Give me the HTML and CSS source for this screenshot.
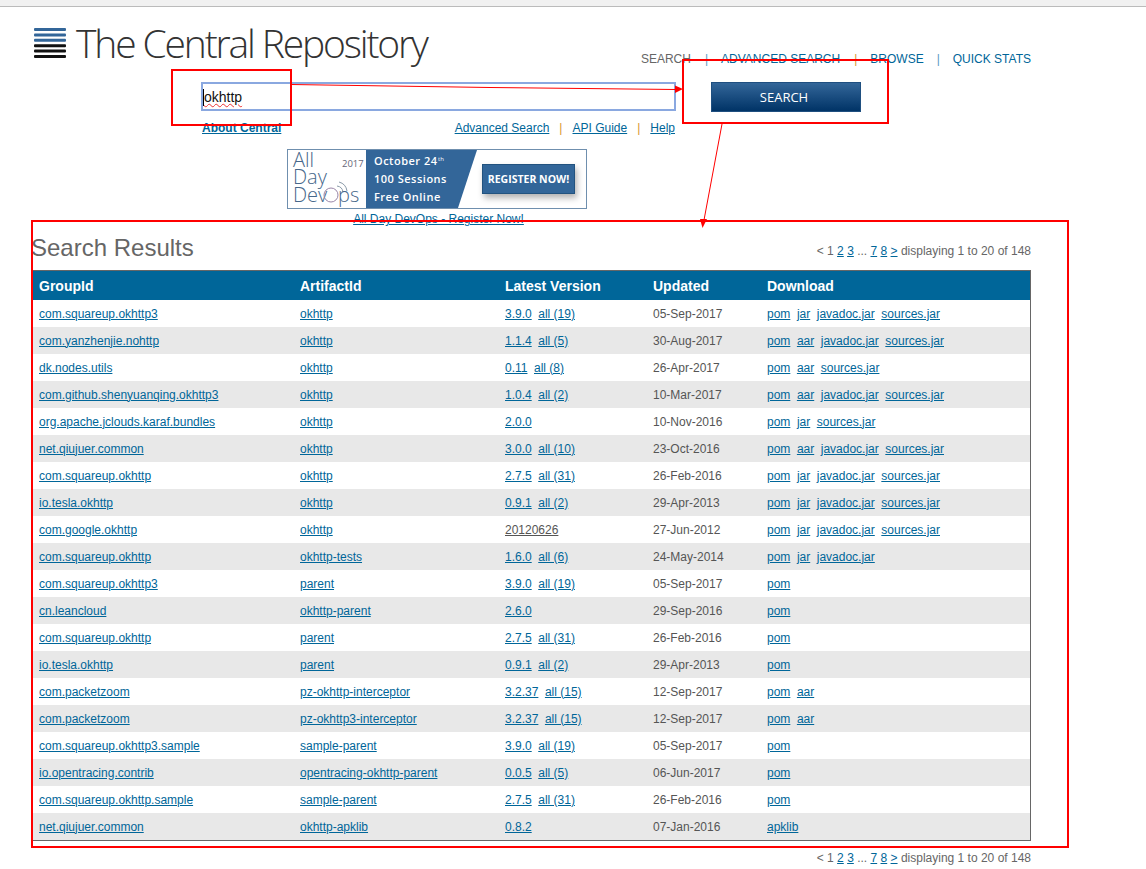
FILE: index.html
```html
<!DOCTYPE html>
<html lang="en">
<head>
    <meta charset="UTF-8">
    <title>The Central Repository Search Results</title>
    <link rel="stylesheet" href="styles.css">
</head>
<body>
    <div class="browser-strip"></div>

    <div class="page">
        <!-- Logo and top navigation -->
        <div class="masthead">
            <div class="logo">
                <svg class="logo-mark" width="32" height="31" viewBox="0 0 32 31">
                    <rect y="0" width="32" height="3" rx="1" fill="#336699"/>
                    <rect y="5.400" width="32" height="3" rx="1" fill="#336699"/>
                    <rect y="10.800" width="32" height="3" rx="1" fill="#336699"/>
                    <rect y="16.200" width="32" height="3" rx="1" fill="#111"/>
                    <rect y="21.600" width="32" height="3" rx="1" fill="#111"/>
                    <rect y="27" width="32" height="3" rx="1" fill="#111"/>
                </svg>
                <span class="logo-text">The Central Repository</span>
            </div>
            <div class="top-nav">
                <span class="current">SEARCH</span>
                <span class="sep blue">|</span>
                <a href="#">ADVANCED SEARCH</a>
                <span class="sep orange wide">|</span>
                <a href="#">BROWSE</a>
                <span class="sep blue">|</span>
                <a href="#">QUICK STATS</a>
            </div>
        </div>

        <!-- Search box -->
        <div class="search-area">
            <div class="search-col">
                <div class="search-box"><span class="caret"></span><span class="search-text">okhttp</span></div>
                <div class="search-links">
                    <a class="about" href="#">About Central</a>
                    <div class="help-links">
                        <a href="#">Advanced Search</a>
                        <span class="sep orange">|</span>
                        <a href="#">API Guide</a>
                        <span class="sep orange">|</span>
                        <a href="#">Help</a>
                    </div>
                </div>
            </div>
            <button class="search-button" type="button">SEARCH</button>
        </div>

        <!-- Banner -->
        <div class="promo">
            <svg class="promo-image" width="300" height="60" viewBox="0 0 300 60">
                <defs>
                    <filter id="ctaShadow" x="-10%" y="-20%" width="125%" height="160%">
                        <feDropShadow dx="2" dy="4" stdDeviation="3" flood-color="#000" flood-opacity="0.3"/>
                    </filter>
                </defs>
                <rect x="0.5" y="0.5" width="299" height="59" fill="#fff" stroke="#6f8fae"/>
                <polygon points="79,1 190,1 171,59 79,59" fill="#336699"/>
                <text x="6" y="18" class="pr-big">All</text>
                <text x="6" y="35" class="pr-big">Day</text>
                <text x="6" y="53" class="pr-big">Dev</text>
                <circle cx="44" cy="46" r="7" fill="none" stroke="#9a86a8" stroke-width="1"/>
                <path d="M50 37a7 7 0 0 1 6 6M52 33a11 11 0 0 1 8 9" fill="none" stroke="#8a9aa8" stroke-width="1"/>
                <text x="51" y="53" class="pr-big">ps</text>
                <text x="55" y="18" class="pr-year">2017</text>
                <text x="87" y="16" class="pr-line">October 24</text>
                <text x="151" y="12" class="pr-th">th</text>
                <text x="87" y="34" class="pr-line">100 Sessions</text>
                <text x="87" y="52" class="pr-line">Free Online</text>
                <rect x="195.500" y="15.500" width="92" height="29" fill="#336699" stroke="#24527f" filter="url(#ctaShadow)"/>
                <text x="241.500" y="34" text-anchor="middle" class="pr-cta">REGISTER NOW!</text>
            </svg>
            <a href="#">All Day DevOps - Register Now!</a>
        </div>

        <!-- Results -->
        <div class="results-head">
            <h2>Search Results</h2>
            <div class="pager">
                &lt; 1 <a href="#">2</a> <a href="#">3</a> ... <a href="#">7</a> <a href="#">8</a> <a href="#">&gt;</a> displaying 1 to 20 of 148
            </div>
        </div>

        <table class="results">
            <colgroup>
                <col class="c-group"><col class="c-artifact"><col class="c-version"><col class="c-updated"><col>
            </colgroup>
            <thead>
                <tr><th>GroupId</th><th>ArtifactId</th><th>Latest Version</th><th>Updated</th><th>Download</th></tr>
            </thead>
            <tbody>
                <tr><td><a href="#">com.squareup.okhttp3</a></td><td><a href="#">okhttp</a></td><td class="links"><a href="#">3.9.0</a> <a href="#">all (19)</a></td><td>05-Sep-2017</td><td class="links"><a href="#">pom</a> <a href="#">jar</a> <a href="#">javadoc.jar</a> <a href="#">sources.jar</a></td></tr>
                <tr><td><a href="#">com.yanzhenjie.nohttp</a></td><td><a href="#">okhttp</a></td><td class="links"><a href="#">1.1.4</a> <a href="#">all (5)</a></td><td>30-Aug-2017</td><td class="links"><a href="#">pom</a> <a href="#">aar</a> <a href="#">javadoc.jar</a> <a href="#">sources.jar</a></td></tr>
                <tr><td><a href="#">dk.nodes.utils</a></td><td><a href="#">okhttp</a></td><td class="links"><a href="#">0.11</a> <a href="#">all (8)</a></td><td>26-Apr-2017</td><td class="links"><a href="#">pom</a> <a href="#">aar</a> <a href="#">sources.jar</a></td></tr>
                <tr><td><a href="#">com.github.shenyuanqing.okhttp3</a></td><td><a href="#">okhttp</a></td><td class="links"><a href="#">1.0.4</a> <a href="#">all (2)</a></td><td>10-Mar-2017</td><td class="links"><a href="#">pom</a> <a href="#">aar</a> <a href="#">javadoc.jar</a> <a href="#">sources.jar</a></td></tr>
                <tr><td><a href="#">org.apache.jclouds.karaf.bundles</a></td><td><a href="#">okhttp</a></td><td class="links"><a href="#">2.0.0</a></td><td>10-Nov-2016</td><td class="links"><a href="#">pom</a> <a href="#">jar</a> <a href="#">sources.jar</a></td></tr>
                <tr><td><a href="#">net.qiujuer.common</a></td><td><a href="#">okhttp</a></td><td class="links"><a href="#">3.0.0</a> <a href="#">all (10)</a></td><td>23-Oct-2016</td><td class="links"><a href="#">pom</a> <a href="#">aar</a> <a href="#">javadoc.jar</a> <a href="#">sources.jar</a></td></tr>
                <tr><td><a href="#">com.squareup.okhttp</a></td><td><a href="#">okhttp</a></td><td class="links"><a href="#">2.7.5</a> <a href="#">all (31)</a></td><td>26-Feb-2016</td><td class="links"><a href="#">pom</a> <a href="#">jar</a> <a href="#">javadoc.jar</a> <a href="#">sources.jar</a></td></tr>
                <tr><td><a href="#">io.tesla.okhttp</a></td><td><a href="#">okhttp</a></td><td class="links"><a href="#">0.9.1</a> <a href="#">all (2)</a></td><td>29-Apr-2013</td><td class="links"><a href="#">pom</a> <a href="#">jar</a> <a href="#">javadoc.jar</a> <a href="#">sources.jar</a></td></tr>
                <tr><td><a href="#">com.google.okhttp</a></td><td><a href="#">okhttp</a></td><td class="links"><a class="plain" href="#">20120626</a></td><td>27-Jun-2012</td><td class="links"><a href="#">pom</a> <a href="#">jar</a> <a href="#">javadoc.jar</a> <a href="#">sources.jar</a></td></tr>
                <tr><td><a href="#">com.squareup.okhttp</a></td><td><a href="#">okhttp-tests</a></td><td class="links"><a href="#">1.6.0</a> <a href="#">all (6)</a></td><td>24-May-2014</td><td class="links"><a href="#">pom</a> <a href="#">jar</a> <a href="#">javadoc.jar</a></td></tr>
                <tr><td><a href="#">com.squareup.okhttp3</a></td><td><a href="#">parent</a></td><td class="links"><a href="#">3.9.0</a> <a href="#">all (19)</a></td><td>05-Sep-2017</td><td class="links"><a href="#">pom</a></td></tr>
                <tr><td><a href="#">cn.leancloud</a></td><td><a href="#">okhttp-parent</a></td><td class="links"><a href="#">2.6.0</a></td><td>29-Sep-2016</td><td class="links"><a href="#">pom</a></td></tr>
                <tr><td><a href="#">com.squareup.okhttp</a></td><td><a href="#">parent</a></td><td class="links"><a href="#">2.7.5</a> <a href="#">all (31)</a></td><td>26-Feb-2016</td><td class="links"><a href="#">pom</a></td></tr>
                <tr><td><a href="#">io.tesla.okhttp</a></td><td><a href="#">parent</a></td><td class="links"><a href="#">0.9.1</a> <a href="#">all (2)</a></td><td>29-Apr-2013</td><td class="links"><a href="#">pom</a></td></tr>
                <tr><td><a href="#">com.packetzoom</a></td><td><a href="#">pz-okhttp-interceptor</a></td><td class="links"><a href="#">3.2.37</a> <a href="#">all (15)</a></td><td>12-Sep-2017</td><td class="links"><a href="#">pom</a> <a href="#">aar</a></td></tr>
                <tr><td><a href="#">com.packetzoom</a></td><td><a href="#">pz-okhttp3-interceptor</a></td><td class="links"><a href="#">3.2.37</a> <a href="#">all (15)</a></td><td>12-Sep-2017</td><td class="links"><a href="#">pom</a> <a href="#">aar</a></td></tr>
                <tr><td><a href="#">com.squareup.okhttp3.sample</a></td><td><a href="#">sample-parent</a></td><td class="links"><a href="#">3.9.0</a> <a href="#">all (19)</a></td><td>05-Sep-2017</td><td class="links"><a href="#">pom</a></td></tr>
                <tr><td><a href="#">io.opentracing.contrib</a></td><td><a href="#">opentracing-okhttp-parent</a></td><td class="links"><a href="#">0.0.5</a> <a href="#">all (5)</a></td><td>06-Jun-2017</td><td class="links"><a href="#">pom</a></td></tr>
                <tr><td><a href="#">com.squareup.okhttp.sample</a></td><td><a href="#">sample-parent</a></td><td class="links"><a href="#">2.7.5</a> <a href="#">all (31)</a></td><td>26-Feb-2016</td><td class="links"><a href="#">pom</a></td></tr>
                <tr><td><a href="#">net.qiujuer.common</a></td><td><a href="#">okhttp-apklib</a></td><td class="links"><a href="#">0.8.2</a></td><td>07-Jan-2016</td><td class="links"><a href="#">apklib</a></td></tr>
            </tbody>
        </table>

        <div class="pager pager-bottom">
            &lt; 1 <a href="#">2</a> <a href="#">3</a> ... <a href="#">7</a> <a href="#">8</a> <a href="#">&gt;</a> displaying 1 to 20 of 148
        </div>
    </div>

    <!-- Red markup drawn over the screenshot -->
    <svg class="markup" width="1146" height="869" viewBox="0 0 1146 869">
        <rect x="172" y="70" width="119" height="55" fill="none" stroke="#f00" stroke-width="2"/>
        <rect x="683" y="60" width="205" height="63" fill="none" stroke="#f00" stroke-width="2"/>
        <rect x="32" y="221" width="1036" height="626" fill="none" stroke="#f00" stroke-width="2"/>
        <path d="M291 84.500L490 87.500L676 89.500" fill="none" stroke="#f00"/>
        <polygon points="675,85.500 683,89 675,93" fill="#f00"/>
        <path d="M722 124L704 220" fill="none" stroke="#f00"/>
        <polygon points="700,219 707,219 702.500,228" fill="#f00"/>
    </svg>
</body>
</html>
```
FILE: styles.css
```css
html, body {
    margin: 0;
    padding: 0;
    background-color: #fff;
}

body {
    font-family: "Liberation Sans", Arial, sans-serif;
    font-size: 12px;
    color: #555;
    overflow: hidden;
}

a {
    color: #006699;
}

.browser-strip {
    height: 6px;
    background-color: #f1f1f1;
    border-bottom: 1px solid #bbb;
}

.page {
    width: 998px;
    margin-left: 33px;
}

.masthead {
    display: flex;
    justify-content: space-between;
    height: 75px;
}

.logo {
    display: flex;
    align-items: flex-start;
    gap: 10px;
    margin-left: 1px;
}

.logo-mark {
    margin-top: 21px;
}

.logo-text {
    font-family: "Open Sans", sans-serif;
    font-weight: 300;
    font-size: 39px;
    line-height: 72px;
    letter-spacing: -2.150px;
    color: #333;
}

.top-nav {
    margin-top: 45px;
    line-height: 15px;
    display: flex;
    gap: 13px;
}

.top-nav a {
    text-decoration: none;
}

.current {
    color: #666;
    margin-right: 1px;
}

.sep.blue {
    color: #5b9bc4;
}

.sep.orange {
    color: #d9952f;
}

.sep.wide {
    margin-left: 1px;
}

.search-area {
    display: flex;
    margin-left: 168px;
    height: 67px;
}

.search-col {
    width: 475px;
}

.search-box {
    box-sizing: border-box;
    display: flex;
    align-items: center;
    height: 29px;
    padding: 1px 0 0 0;
    border: 2px solid #8aa8e0;
    font-size: 14px;
    color: #111;
}

.caret {
    width: 1px;
    height: 17px;
    background-color: #000;
}

.search-text {
    text-decoration: underline wavy #e33 1px;
}

.search-links {
    display: flex;
    justify-content: space-between;
    margin-top: 10px;
    line-height: 15px;
}

.about {
    font-weight: bold;
    margin-left: 1px;
}

.help-links {
    display: flex;
    gap: 10px;
    margin-right: 1px;
}

.search-button {
    width: 150px;
    height: 30px;
    margin-left: 35px;
    padding: 0 4px 0 0;
    border: 1px solid #1f4f80;
    background: linear-gradient(#336699, #003366);
    color: #fff;
    font-family: "Open Sans", sans-serif;
    font-size: 13px;
}

.promo {
    width: 300px;
    margin-left: 254px;
    text-align: center;
    line-height: 13px;
    height: 74px;
}

.promo a {
    margin-left: 3px;
}

.promo-image {
    display: block;
    margin-bottom: 4px;
    overflow: visible;
}

.pr-big {
    font-family: "Open Sans", sans-serif;
    font-weight: 300;
    font-size: 20px;
    fill: #46678a;
}

.pr-year {
    font-family: "Open Sans", sans-serif;
    font-size: 9.500px;
    fill: #667;
}

.pr-line {
    font-family: "Open Sans", sans-serif;
    font-weight: 600;
    font-size: 11px;
    letter-spacing: 0.5px;
    fill: #fff;
}

.pr-th {
    font-family: "Open Sans", sans-serif;
    font-size: 6px;
    fill: #fff;
}

.pr-cta {
    font-family: "Open Sans", sans-serif;
    font-weight: 700;
    font-size: 10.500px;
    fill: #fff;
}

.results-head {
    display: flex;
    justify-content: space-between;
    height: 47px;
}

.results-head h2 {
    margin: 11px 0 0 -2px;
    font-size: 24px;
    line-height: 28px;
    font-weight: normal;
    color: #666;
}

.results-head .pager {
    margin-top: 21px;
}

.pager {
    color: #666;
    text-align: right;
    line-height: 15px;
}

.pager-bottom {
    margin-top: 10px;
}

.results {
    width: 998px;
    border-collapse: collapse;
    table-layout: fixed;
    border: 1px solid #666;
    border-left: 0;
}

.c-group {
    width: 261px;
}

.c-artifact {
    width: 205px;
}

.c-version {
    width: 148px;
}

.c-updated {
    width: 114px;
}

.results th {
    height: 29px;
    padding: 0 0 0 6px;
    background-color: #006699;
    color: #fff;
    font-size: 14px;
    text-align: left;
}

.results td {
    height: 27px;
    padding: 0 0 0 6px;
}

.results tbody tr:nth-child(even) {
    background-color: #e8e8e8;
}

.links a {
    margin-right: 3.200px;
}

.links a.plain {
    color: #555;
}

.markup {
    position: absolute;
    top: 0;
    left: 0;
    pointer-events: none;
}
```
